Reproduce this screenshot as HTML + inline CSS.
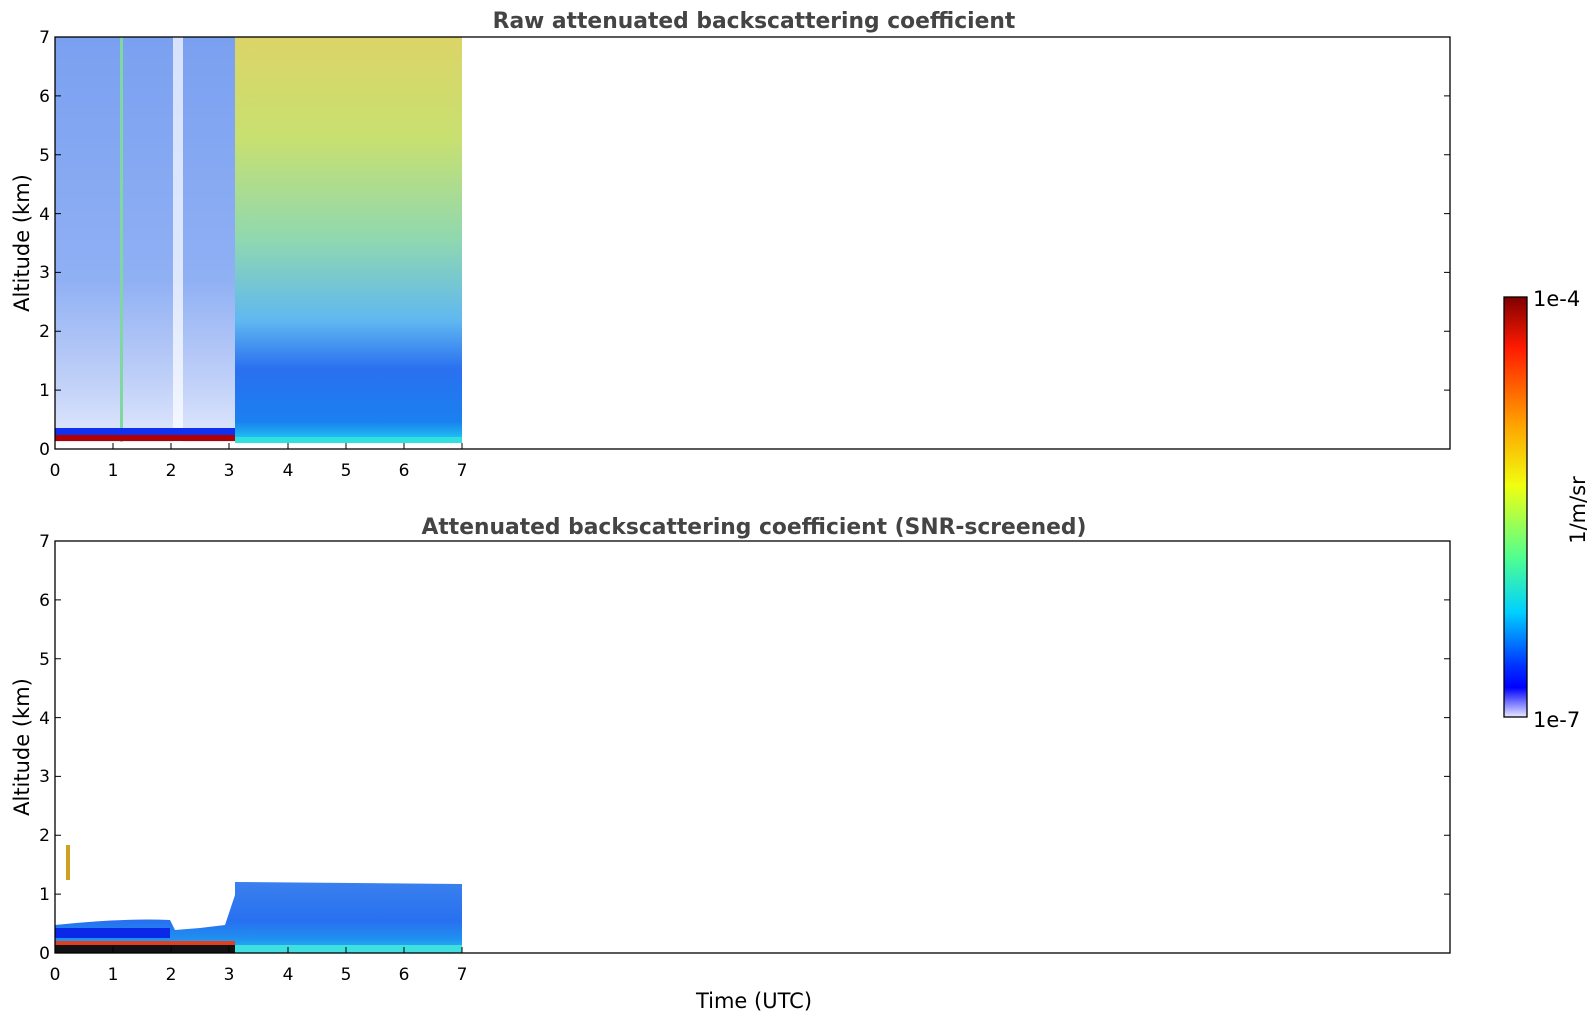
<!DOCTYPE html>
<html><head><meta charset="utf-8"><style>
html,body{margin:0;padding:0;background:#fff;width:1595px;height:1020px;overflow:hidden}
svg{display:block;font-family:"DejaVu Sans","Liberation Sans",sans-serif}
</style></head><body>
<svg width="1595" height="1020" viewBox="0 0 1595 1020" xmlns="http://www.w3.org/2000/svg">
<defs>
<linearGradient id="jet" x1="0" y1="0" x2="0" y2="1">
<stop offset="0" stop-color="#800000"/><stop offset="0.12" stop-color="#ff1a00"/>
<stop offset="0.3" stop-color="#ffa000"/><stop offset="0.45" stop-color="#f0ff10"/>
<stop offset="0.62" stop-color="#50ff90"/><stop offset="0.75" stop-color="#00d0ff"/>
<stop offset="0.88" stop-color="#0030ff"/><stop offset="0.93" stop-color="#0000ff"/>
<stop offset="1" stop-color="#e8e8ff"/></linearGradient>
<linearGradient id="r1" x1="0" y1="0" x2="0" y2="1">
<stop offset="0" stop-color="#dcd468"/><stop offset="0.25" stop-color="#c8e070"/>
<stop offset="0.5" stop-color="#90d8b0"/><stop offset="0.7" stop-color="#60b8f0"/>
<stop offset="0.82" stop-color="#2a70f0"/><stop offset="0.95" stop-color="#1a80f0"/>
<stop offset="1" stop-color="#20d0f0"/></linearGradient>
<linearGradient id="l1" x1="0" y1="0" x2="0" y2="1">
<stop offset="0" stop-color="#7aa0f0"/><stop offset="0.6" stop-color="#90b0f4"/>
<stop offset="0.85" stop-color="#c0d0f8"/><stop offset="1" stop-color="#e0e8fc"/></linearGradient>
<linearGradient id="b1" x1="0" y1="0" x2="0" y2="1">
<stop offset="0" stop-color="#3a80ee"/><stop offset="0.55" stop-color="#2870f0"/>
<stop offset="0.8" stop-color="#2090f0"/><stop offset="1" stop-color="#20c8f0"/></linearGradient>
</defs>
<rect x="55" y="37" width="180" height="405" fill="url(#l1)"/>
<rect x="173" y="37" width="10" height="405" fill="#fff" opacity="0.7"/>
<rect x="120" y="37" width="3" height="405" fill="#80d8a0"/>
<rect x="235" y="37" width="227" height="405" fill="url(#r1)"/>
<rect x="55" y="428" width="180" height="7" fill="#1030f0"/>
<rect x="55" y="435" width="180" height="6" fill="#b00000"/>
<rect x="235" y="437" width="227" height="6" fill="#30e0e0"/>
<path d="M55 941 L55 925 Q120 918 170 920 L175 930 L200 928 L225 925 L235 895 L235 882 L462 884 L462 953 L55 953 Z" fill="url(#b1)"/>
<rect x="55" y="928" width="115" height="10" fill="#0a28e8"/>
<rect x="55" y="945" width="180" height="8" fill="#111"/>
<rect x="55" y="941" width="180" height="4" fill="#e04020"/>
<rect x="235" y="945" width="227" height="8" fill="#40e0e0"/>
<rect x="66" y="845" width="4" height="35" fill="#d0a020"/>
<g fill="none" stroke="#000" stroke-width="1.3">
<rect x="55" y="37" width="1395" height="412"/>
<rect x="55" y="541" width="1395" height="412"/>
<rect x="1504" y="297" width="23" height="420" fill="url(#jet)"/>
</g>
<g stroke="#000" stroke-width="1">
<path d="M55 390.1h6M55 331.3h6M55 272.4h6M55 213.6h6M55 154.7h6M55 95.9h6M1444 390.1h6M1444 331.3h6M1444 272.4h6M1444 213.6h6M1444 154.7h6M1444 95.9h6"/>
<path d="M55 894.1h6M55 835.3h6M55 776.4h6M55 717.6h6M55 658.7h6M55 599.9h6M1444 894.1h6M1444 835.3h6M1444 776.4h6M1444 717.6h6M1444 658.7h6M1444 599.9h6"/>
<path d="M113 449v-6M171 449v-6M229 449v-6M288 449v-6M346 449v-6M404 449v-6M462 449v-6M113 953v-6M171 953v-6M229 953v-6M288 953v-6M346 953v-6M404 953v-6M462 953v-6"/>
</g>
<g font-size="17" fill="#000" text-anchor="end">
<text x="50" y="455">0</text><text x="50" y="396">1</text><text x="50" y="337">2</text><text x="50" y="278">3</text><text x="50" y="220">4</text><text x="50" y="161">5</text><text x="50" y="102">6</text><text x="50" y="43">7</text>
<text x="50" y="959">0</text><text x="50" y="900">1</text><text x="50" y="841">2</text><text x="50" y="782">3</text><text x="50" y="724">4</text><text x="50" y="665">5</text><text x="50" y="606">6</text><text x="50" y="547">7</text>
</g>
<g font-size="17" fill="#000" text-anchor="middle">
<text x="55" y="476">0</text><text x="113" y="476">1</text><text x="171" y="476">2</text><text x="229" y="476">3</text><text x="288" y="476">4</text><text x="346" y="476">5</text><text x="404" y="476">6</text><text x="462" y="476">7</text>
<text x="55" y="980">0</text><text x="113" y="980">1</text><text x="171" y="980">2</text><text x="229" y="980">3</text><text x="288" y="980">4</text><text x="346" y="980">5</text><text x="404" y="980">6</text><text x="462" y="980">7</text>
<text x="754" y="1008" font-size="21">Time (UTC)</text>
<text x="754" y="28" font-size="21.8" font-weight="bold" fill="#444">Raw attenuated backscattering coefficient</text>
<text x="754" y="534" font-size="21.8" font-weight="bold" fill="#444">Attenuated backscattering coefficient (SNR-screened)</text>
<text transform="translate(29 243) rotate(-90)" font-size="21">Altitude (km)</text>
<text transform="translate(29 747) rotate(-90)" font-size="21">Altitude (km)</text>
<text transform="translate(1585 510) rotate(-90)" font-size="21">1/m/sr</text>
</g>
<g font-size="21" fill="#000">
<text x="1533" y="306">1e-4</text><text x="1533" y="727">1e-7</text>
</g>
</svg>
</body></html>
